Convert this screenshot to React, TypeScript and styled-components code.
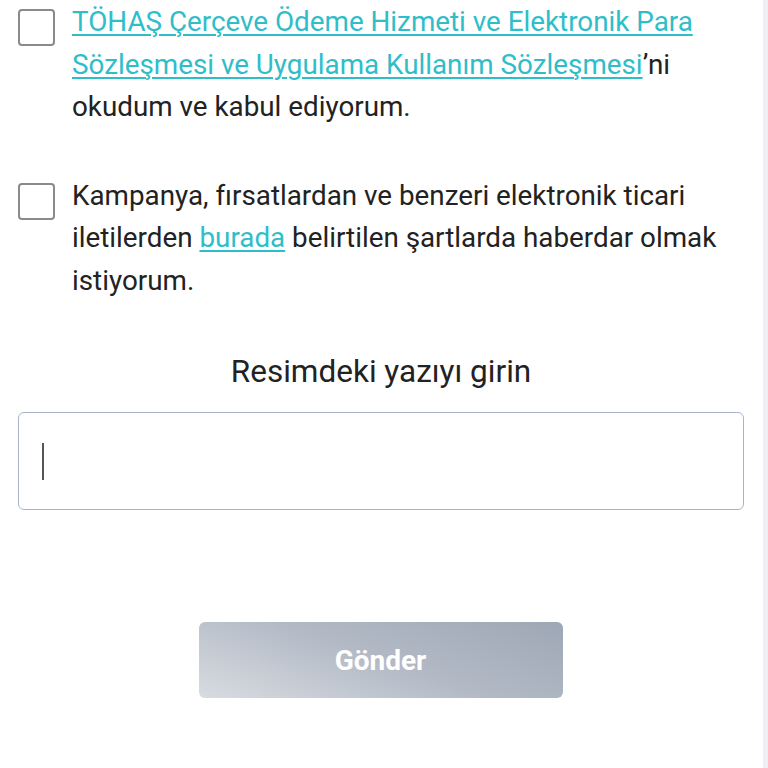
import styled, { createGlobalStyle } from "styled-components";

const GlobalStyle = createGlobalStyle`
  html, body {
    margin: 0;
    padding: 0;
    background: #ffffff;
  }
  body {
    font-family: Roboto, "Liberation Sans", sans-serif;
    color: #222222;
  }
`;

const Page = styled.div`
  display: flex;
  min-height: 768px;
`;

const Main = styled.main`
  flex: 1;
  display: flex;
  flex-direction: column;
  padding: 0 19px 0 18px;
`;

const ScrollStrip = styled.div`
  width: 5px;
  background: #eef0f4;
`;

const ConsentRow = styled.label<{ $top: number }>`
  display: flex;
  gap: 17px;
  align-items: flex-start;
  margin-top: ${(p) => p.$top}px;
`;

const Box = styled.span`
  flex: none;
  width: 37px;
  height: 37px;
  box-sizing: border-box;
  border: 2px solid #8a8a8a;
  border-radius: 4px;
  margin-top: 8px;
`;

const ConsentText = styled.p`
  margin: 0;
  font-size: 27.8px;
  line-height: 42.5px;
  color: #222222;
`;

const Link = styled.a`
  color: #2fbdca;
  text-decoration: underline;
  text-underline-offset: 3px;
  text-decoration-thickness: 2px;
`;

const Heading = styled.h2`
  margin: 50px 0 0;
  font-size: 31.5px;
  font-weight: 400;
  text-align: center;
  line-height: 40px;
  color: #222222;
`;

const CaptchaInput = styled.div`
  margin-top: 20px;
  height: 98px;
  box-sizing: border-box;
  border: 1.5px solid #a6b5cc;
  border-radius: 6px;
  display: flex;
  align-items: center;
  padding-left: 23px;
`;

const Caret = styled.span`
  width: 2px;
  height: 37px;
  background: #555555;
`;

const SubmitButton = styled.button`
  align-self: center;
  margin: 112px 0 0 -1px;
  width: 364px;
  height: 76px;
  border: none;
  border-radius: 6px;
  background: linear-gradient(200deg, #9ea7b5 0%, #b3bac6 50%, #d8dce1 100%);
  color: #ffffff;
  font-family: Roboto, "Liberation Sans", sans-serif;
  font-size: 28px;
  font-weight: 700;
`;

export default function App() {
  return (
    <>
      <GlobalStyle />
      <Page>
        <Main>
          <ConsentRow $top={1}>
            <Box />
            <ConsentText>
              <Link>
                TÖHAŞ Çerçeve Ödeme Hizmeti ve Elektronik Para Sözleşmesi ve
                Uygulama Kullanım Sözleşmesi
              </Link>
              ’ni okudum ve kabul ediyorum.
            </ConsentText>
          </ConsentRow>
          <ConsentRow $top={46}>
            <Box />
            <ConsentText>
              Kampanya, fırsatlardan ve benzeri elektronik ticari iletilerden{" "}
              <Link>burada</Link> belirtilen şartlarda haberdar olmak
              istiyorum.
            </ConsentText>
          </ConsentRow>
          <Heading>Resimdeki yazıyı girin</Heading>
          <CaptchaInput>
            <Caret />
          </CaptchaInput>
          <SubmitButton>Gönder</SubmitButton>
        </Main>
        <ScrollStrip />
      </Page>
    </>
  );
}
